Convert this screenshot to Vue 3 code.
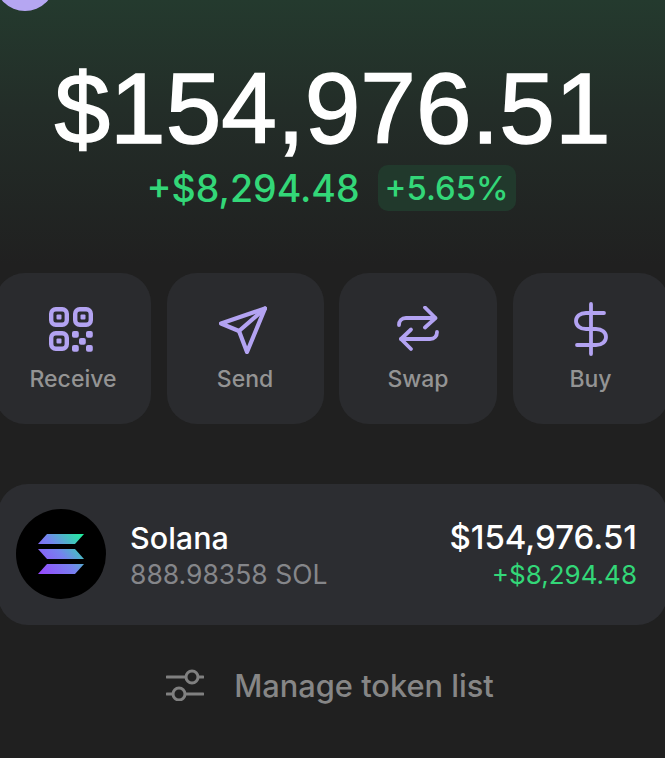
<template>
  <div class="wallet">
    <div class="avatar"></div>

    <div class="balance">$154,976.51</div>
    <div class="change">
      <span class="change-amount">+$8,294.48</span>
      <span class="change-pct">+5.65%</span>
    </div>

    <div class="actions">
      <div class="action">
        <svg class="action-icon nudge" viewBox="0 0 48 48" fill="none" stroke="#b3a3f2" stroke-width="4.4">
          <rect x="4.200" y="3.200" width="15.600" height="15.600" rx="4.500" />
          <rect x="28.200" y="3.200" width="15.600" height="15.600" rx="4.500" />
          <rect x="4.200" y="27.200" width="15.600" height="15.600" rx="4.500" />
          <g fill="#b3a3f2" stroke="none">
            <rect x="9.500" y="8.500" width="5" height="5" rx="1" />
            <rect x="33.500" y="8.500" width="5" height="5" rx="1" />
            <rect x="9.500" y="32.500" width="5" height="5" rx="1" />
            <rect x="25" y="25" width="6.800" height="6.800" rx="2" />
            <rect x="39" y="25" width="6.800" height="6.800" rx="2" />
            <rect x="32" y="32" width="6.800" height="6.800" rx="2" />
            <rect x="25" y="39" width="6.800" height="6.800" rx="2" />
            <rect x="39" y="39" width="6.800" height="6.800" rx="2" />
          </g>
        </svg>
        <span>Receive</span>
      </div>
      <div class="action">
        <svg class="action-icon nudge" viewBox="0 0 48 48" fill="none" stroke="#b3a3f2" stroke-width="4.2" stroke-linejoin="round" stroke-linecap="round">
          <path d="M46 2.500 2 17.500l18 7.500 8 21z" />
          <path d="M46 2.500 20 25" />
        </svg>
        <span>Send</span>
      </div>
      <div class="action">
        <svg class="action-icon" viewBox="0 0 48 48" fill="none" stroke="#b3a3f2" stroke-width="3.8" stroke-linejoin="round" stroke-linecap="round">
          <path d="M5 19c0-4 2.500-7 7-7h29" />
          <path d="M31 1.500 41.500 12 31 21.500" />
          <path d="M43 26c0 4-2.500 7-7 7H7" />
          <path d="M17 23.500 7 33l10 10" />
        </svg>
        <span>Swap</span>
      </div>
      <div class="action">
        <svg class="action-icon dollar" viewBox="0 0 48 54" fill="none" stroke="#b3a3f2" stroke-width="3.8" stroke-linecap="round">
          <path d="M24 2v50" />
          <path d="M37 11H19c-6 0-10 3.500-10 8s4 8 10 8h10c6 0 10 3.500 10 8s-4 8-10 8H10" />
        </svg>
        <span>Buy</span>
      </div>
    </div>

    <div class="token">
      <svg class="token-logo" viewBox="0 0 90 90">
        <defs>
          <linearGradient id="solGrad" gradientUnits="userSpaceOnUse" x1="22" y1="65" x2="68" y2="25">
            <stop offset="0" stop-color="#9945ff" />
            <stop offset="0.5" stop-color="#7583ee" />
            <stop offset="1" stop-color="#1cf59a" />
          </linearGradient>
        </defs>
        <circle cx="45" cy="45" r="45" fill="#000" />
        <g fill="url(#solGrad)">
          <path d="M31 25h37l-9 10H22z" />
          <path d="M22 40h37l9 10H31z" />
          <path d="M31 55h37l-9 10H22z" />
        </g>
      </svg>
      <div class="token-info">
        <div class="token-name">Solana</div>
        <div class="token-amount">888.98358 SOL</div>
      </div>
      <div class="token-values">
        <div class="token-usd">$154,976.51</div>
        <div class="token-gain">+$8,294.48</div>
      </div>
    </div>

    <div class="manage">
      <svg class="manage-icon" viewBox="0 0 38 32" fill="none" stroke="#808080" stroke-width="3" stroke-linecap="round">
        <path d="M1 8h18M33 8h4" />
        <circle cx="26" cy="8" r="6" />
        <path d="M1 25h5M20 25h17" />
        <circle cx="13" cy="25" r="6" />
      </svg>
      <span>Manage token list</span>
    </div>
  </div>
</template>

<script setup>
</script>

<style>
html,
body {
  margin: 0;
  background: #202020;
}
</style>

<style scoped>
.wallet {
  width: 665px;
  height: 758px;
  overflow: hidden;
  background: linear-gradient(180deg, #243a2e 0%, #232d28 110px, #202020 265px);
  font-family: Inter, "Liberation Sans", sans-serif;
}

.avatar {
  width: 60px;
  height: 60px;
  margin: -49px 0 0 -5px;
  border-radius: 50%;
  background: #b5a6f2;
}

.balance {
  margin-top: 41px;
  height: 113px;
  line-height: 113px;
  text-align: center;
  color: #fff;
  font-family: "Liberation Sans", Arial, sans-serif;
  font-size: 100px;
  -webkit-text-stroke: 1.500px #fff;
  white-space: nowrap;
}

.change {
  display: flex;
  justify-content: center;
  align-items: center;
  gap: 18px;
  height: 46px;
  padding-right: 2px;
  color: #33d778;
  font-size: 37.500px;
  font-weight: 500;
  white-space: nowrap;
}

.change-pct {
  padding: 0 8px 0 7px;
  height: 46px;
  line-height: 46px;
  border-radius: 10px;
  background: #21392c;
  font-size: 32.800px;
  font-weight: 500;
}

.actions {
  display: grid;
  grid-template-columns: 156px 157px 158px 156px;
  gap: 15.500px;
  width: 680px;
  margin: 62px 0 0 -5px;
}

.action {
  display: flex;
  flex-direction: column;
  align-items: center;
  height: 151px;
  padding-top: 33px;
  box-sizing: border-box;
  border-radius: 30px;
  background: #2a2b2e;
  color: #949494;
  font-size: 23px;
  font-weight: 500;
}

.action-icon {
  width: 48px;
  height: 48px;
  margin-bottom: 11px;
}

.action-icon.nudge {
  margin-right: 4px;
}

.action-icon.dollar {
  height: 54px;
  margin-top: -4px;
  margin-bottom: 9px;
}

.token {
  display: flex;
  align-items: center;
  width: 669px;
  height: 141px;
  margin: 60px 0 0 -2px;
  padding: 0 30px 0 18px;
  box-sizing: border-box;
  border-radius: 30px;
  background: #2c2d31;
}

.token-logo {
  width: 90px;
  height: 90px;
  flex: none;
  margin-bottom: 2px;
}

.token-info {
  margin: 3px 0 0 24px;
  flex: 1;
}

.token-name {
  color: #fff;
  font-size: 30.500px;
  font-weight: 500;
  line-height: 37px;
}

.token-amount {
  color: #85868a;
  font-size: 26.500px;
  line-height: 37px;
}

.token-values {
  margin-top: 3px;
  text-align: right;
}

.token-usd {
  color: #fff;
  font-size: 33px;
  font-weight: 500;
  line-height: 37px;
}

.token-gain {
  color: #33d778;
  font-size: 26px;
  line-height: 37px;
}

.manage {
  display: flex;
  justify-content: center;
  align-items: center;
  gap: 30px;
  margin-top: 36px;
  height: 48px;
  padding-right: 5px;
  color: #868686;
  font-size: 30.800px;
  font-weight: 500;
}

.manage-icon {
  width: 38px;
  height: 32px;
}
</style>
